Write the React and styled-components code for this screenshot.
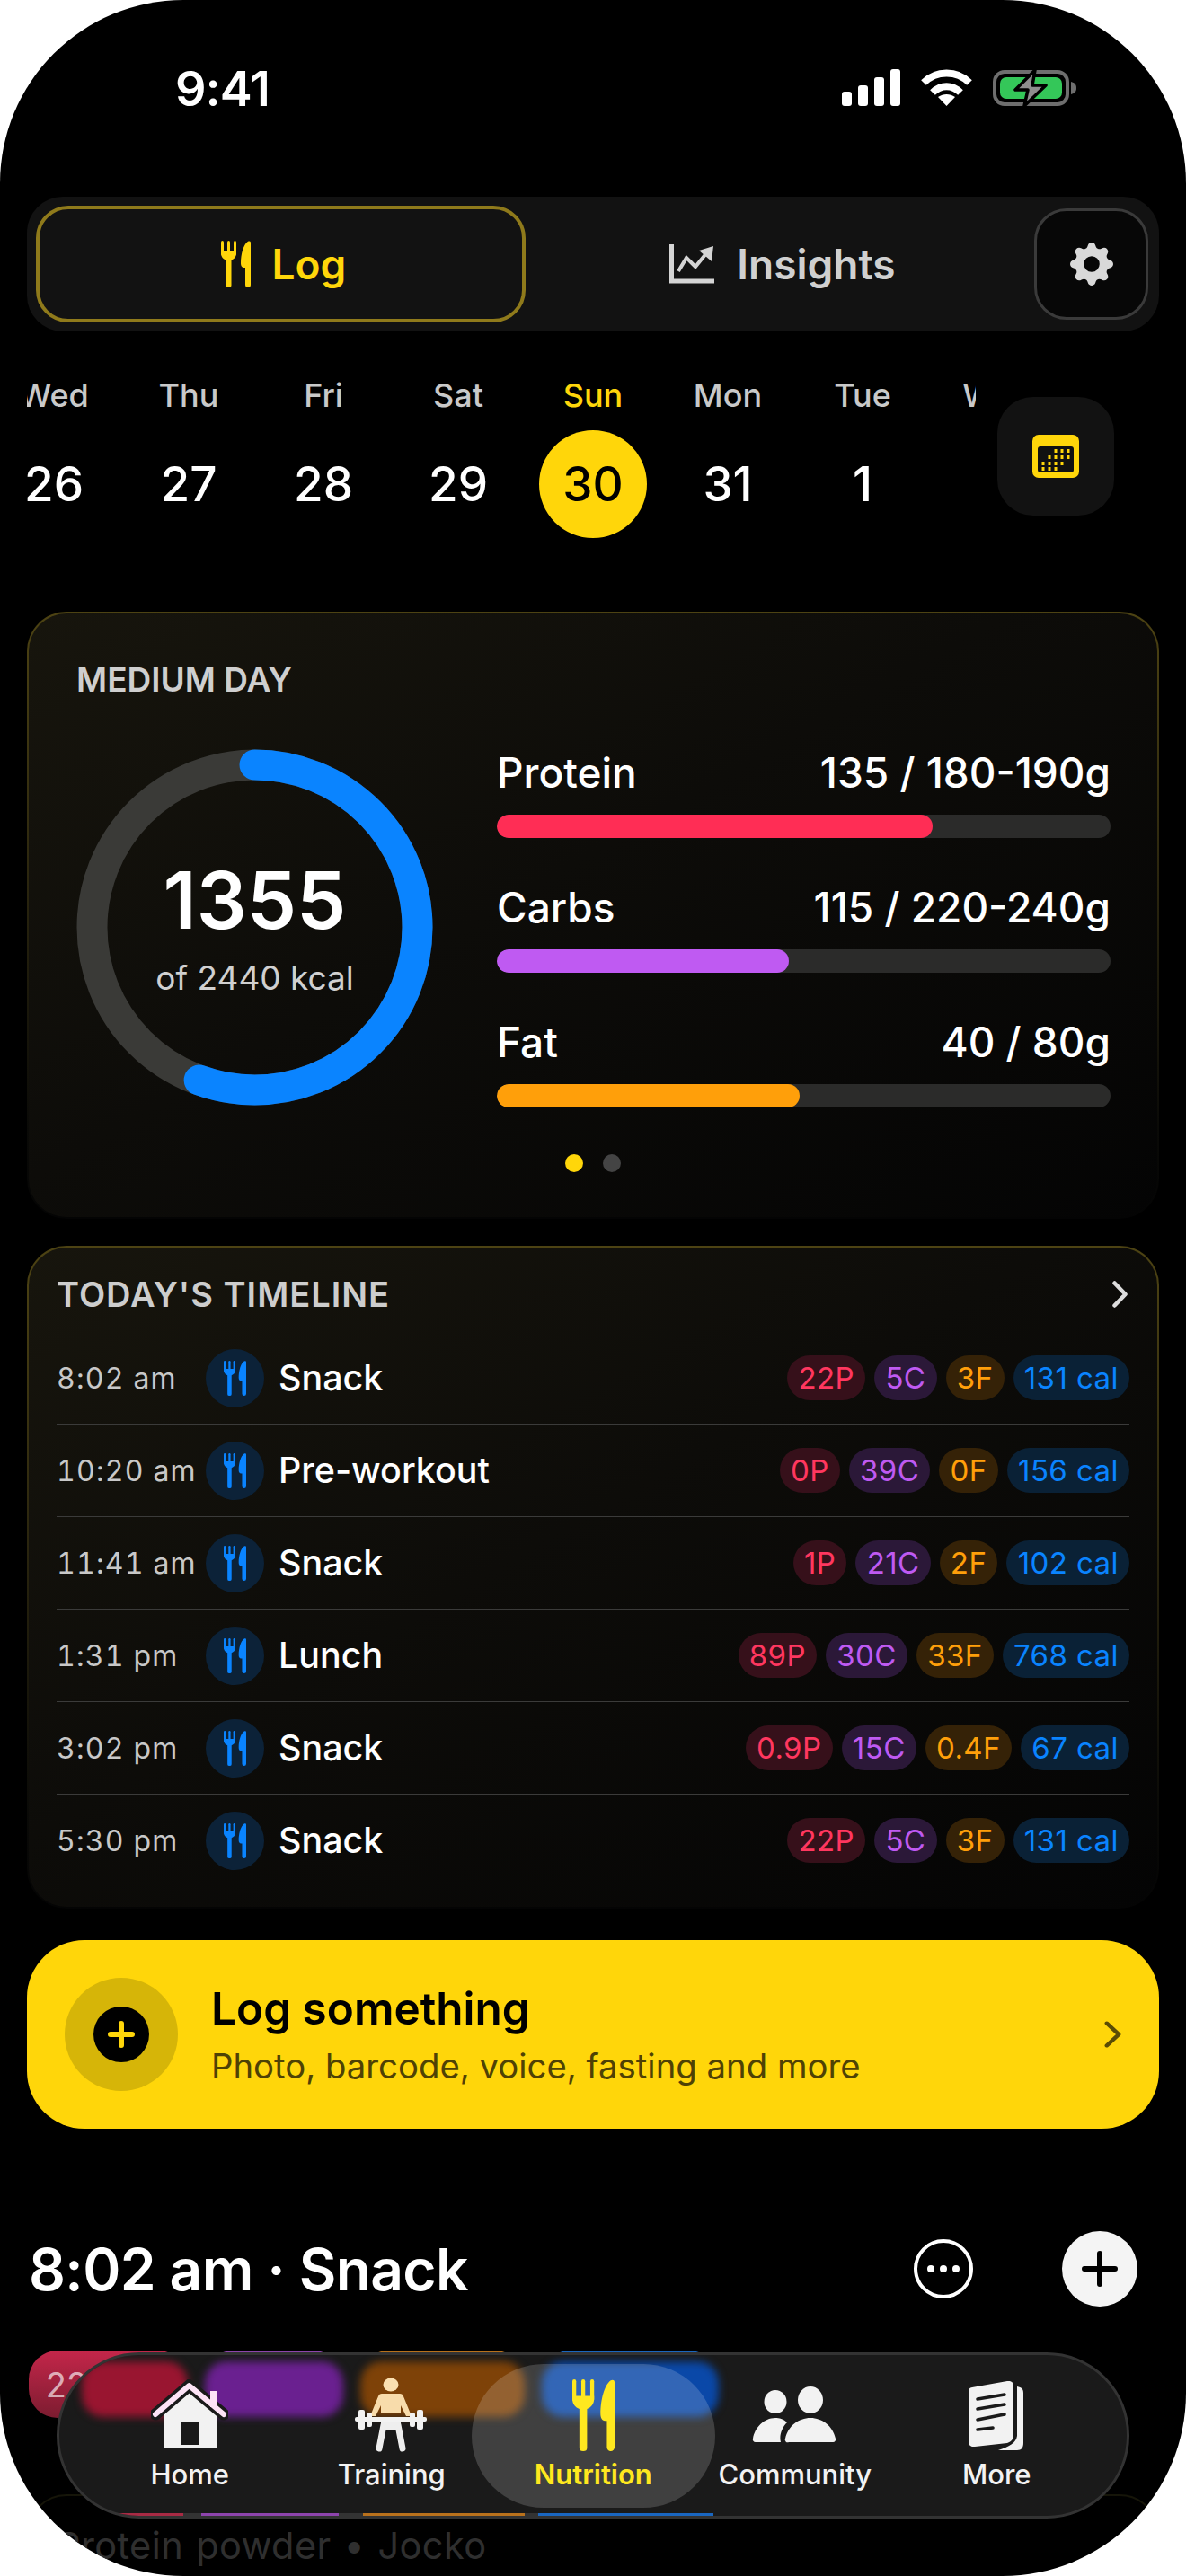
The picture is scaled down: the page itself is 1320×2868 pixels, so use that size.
import React from 'react'
import styled, { createGlobalStyle } from 'styled-components'
import { BsGearFill } from 'react-icons/bs'

const YELLOW = '#FFD60A'
const RED = '#FF375F'
const PURPLE = '#BF5AF2'
const ORANGE = '#FF9F0A'
const BLUE = '#0A84FF'

const Global = createGlobalStyle`
  html, body { margin: 0; background: #fff; }
  * { box-sizing: border-box; }
`

const Screen = styled.div`
  position: relative;
  width: 1320px;
  height: 2868px;
  padding: 0 30px;
  overflow: hidden;
  border-radius: 204px;
  background: #000;
  color: #fff;
  font-family: Inter, "Noto Sans", sans-serif;
`

const StatusBar = styled.div`
  display: flex;
  align-items: center;
  justify-content: space-between;
  height: 219px;
  padding: 0 92px 0 165px;
  & > span {
    font-size: 54px;
    font-weight: 600;
    letter-spacing: -1px;
    margin-top: -22px;
  }
`
const StatusIcons = styled.div`
  display: flex;
  align-items: center;
  gap: 23px;
  margin-top: -24px;
`

const Segment = styled.div`
  display: flex;
  align-items: center;
  height: 150px;
  padding: 0 10px;
  border-radius: 40px;
  background: #121212;
`
const SegmentTab = styled.div`
  display: flex;
  align-items: center;
  justify-content: center;
  gap: 24px;
  width: 545px;
  height: 130px;
  padding-left: 6px;
  border: 4px solid ${p => (p.$active ? '#8f7a1b' : 'transparent')};
  border-radius: 36px;
  color: ${p => (p.$active ? YELLOW : '#d0d0d0')};
  font-size: 46px;
  font-weight: 600;
`
const InsightsTab = styled(SegmentTab)`
  width: 566px;
  gap: 25px;
`
const GearButton = styled.div`
  display: flex;
  align-items: center;
  justify-content: center;
  width: 127px;
  height: 124px;
  border: 3px solid #3a3a3a;
  border-radius: 36px;
  background: #070707;
  color: #d9d9d9;
  font-size: 48px;
`

const CalendarRow = styled.div`
  display: flex;
  align-items: flex-start;
  gap: 24px;
  margin-top: 46px;
`
const DayStrip = styled.div`
  display: flex;
  flex: none;
  width: 1056px;
  overflow: hidden;
`
const DayColumn = styled.div`
  flex: none;
  width: 150px;
  display: flex;
  flex-direction: column;
  align-items: center;
  &:first-child { margin-left: -45px; }
`
const DayName = styled.div`
  height: 50px;
  line-height: 50px;
  font-size: 36px;
  font-weight: 500;
  color: ${p => (p.$active ? YELLOW : '#c9c9c9')};
`
const DayNumber = styled.div`
  display: flex;
  align-items: center;
  justify-content: center;
  width: 120px;
  height: 120px;
  margin-top: 14px;
  border-radius: 50%;
  font-size: 53px;
  font-weight: 500;
  background: ${p => (p.$active ? YELLOW : 'transparent')};
  color: ${p => (p.$active ? '#000' : '#fff')};
`
const CalendarButton = styled.div`
  flex: none;
  display: flex;
  align-items: center;
  justify-content: center;
  width: 130px;
  height: 132px;
  margin-top: 27px;
  border-radius: 40px;
  background: #121212;
`

const GoldCard = styled.section`
  border: 2px solid transparent;
  border-radius: 44px;
  background:
    linear-gradient(150deg, #17150d 0%, #0d0c09 45%, #040404 100%) padding-box,
    linear-gradient(180deg, #4d4313 0%, #2a250e 45%, #0a0a07 85%, #040404 100%) border-box;
`
const SummaryCard = styled(GoldCard)`
  margin-top: 82px;
  padding: 49px 52px 50px 53px;
`
const CardLabel = styled.div`
  height: 50px;
  line-height: 50px;
  font-size: 37px;
  font-weight: 600;
  color: #cfcfcf;
`
const SummaryBody = styled.div`
  display: flex;
  gap: 71px;
  margin-top: 52px;
`
const RingWrap = styled.div`
  position: relative;
  flex: none;
  width: 397px;
  height: 397px;
`
const RingCenter = styled.div`
  position: absolute;
  inset: 0;
  display: flex;
  flex-direction: column;
  align-items: center;
  justify-content: center;
`
const RingValue = styled.div`
  margin-top: -2px;
  font-size: 88px;
  font-weight: 600;
  line-height: 100px;
`
const RingCaption = styled.div`
  margin-top: 14px;
  font-size: 37px;
  color: #d0d0d0;
`
const MacroList = styled.div`
  flex: 1;
  display: flex;
  flex-direction: column;
  gap: 51px;
`
const MacroHead = styled.div`
  display: flex;
  justify-content: space-between;
  height: 52px;
  line-height: 52px;
  font-size: 46px;
  font-weight: 500;
`
const MacroTrack = styled.div`
  height: 26px;
  margin-top: 21px;
  border-radius: 13px;
  overflow: hidden;
  background: #2b2b2a;
`
const MacroFill = styled.div`
  height: 100%;
  border-radius: 13px;
  background: ${p => p.$color};
`
const Dots = styled.div`
  display: flex;
  justify-content: center;
  gap: 22px;
  margin: 52px 0 0 -1px;
`
const Dot = styled.span`
  width: 20px;
  height: 20px;
  border-radius: 50%;
  background: ${p => (p.$active ? YELLOW : '#444')};
`

const TimelineCard = styled(GoldCard)`
  margin-top: 30px;
  padding: 27px 31px 22px;
`
const TimelineHead = styled.div`
  display: flex;
  align-items: center;
  justify-content: space-between;
  height: 50px;
  margin-bottom: 17px;
  padding-right: 2px;
  font-size: 38px;
  font-weight: 600;
  letter-spacing: 1px;
  color: #cdcdcd;
`
const Row = styled.div`
  display: flex;
  align-items: center;
  height: 103px;
  border-bottom: 1.5px solid ${p => (p.$last ? 'transparent' : '#3b3b3a')};
`
const RowTime = styled.div`
  flex: none;
  width: 166px;
  font-size: 32px;
  font-variant-numeric: tabular-nums;
  letter-spacing: 1.2px;
  color: #c8c8c8;
`
const RowIcon = styled.div`
  flex: none;
  display: flex;
  align-items: center;
  justify-content: center;
  width: 65px;
  height: 65px;
  border-radius: 50%;
  background: #0c2238;
  color: ${BLUE};
`
const RowTitle = styled.div`
  flex: 1;
  margin-left: 16px;
  font-size: 39.4px;
  font-weight: 500;
`
const Pills = styled.div`
  display: flex;
  gap: 10px;
`
const Pill = styled.span`
  display: flex;
  align-items: center;
  height: 50px;
  padding: 0 12.2px;
  border-radius: 25px;
  font-size: 33px;
  letter-spacing: 0.4px;
  color: ${p => p.$color};
  background: ${p => p.$bg};
`

const LogBanner = styled.div`
  display: flex;
  align-items: center;
  height: 210px;
  margin-top: 35px;
  padding: 0 42px;
  border-radius: 64px;
  background: ${YELLOW};
`
const LogHalo = styled.div`
  flex: none;
  display: flex;
  align-items: center;
  justify-content: center;
  width: 126px;
  height: 126px;
  border-radius: 50%;
  background: #d6b508;
`
const LogDisc = styled.div`
  display: flex;
  align-items: center;
  justify-content: center;
  width: 62px;
  height: 62px;
  border-radius: 50%;
  background: #000;
`
const LogText = styled.div`
  flex: 1;
  margin-left: 37px;
`
const LogTitle = styled.div`
  font-size: 49.5px;
  font-weight: 600;
  line-height: 60px;
  color: #000;
`
const LogSub = styled.div`
  margin-top: 10px;
  font-size: 38.3px;
  line-height: 48px;
  color: #4f4205;
`

const MealHead = styled.div`
  display: flex;
  align-items: center;
  height: 80px;
  margin-top: 116px;
  padding-left: 2px;
  font-size: 64px;
  font-weight: 600;
  letter-spacing: -0.6px;
`
const MealTitle = styled.div`
  flex: 1;
`
const MoreRing = styled.div`
  display: flex;
  align-items: center;
  justify-content: center;
  width: 66px;
  height: 66px;
  margin-right: 99px;
  border: 4.5px solid #fff;
  border-radius: 50%;
  gap: 6px;
  & > i {
    width: 8px;
    height: 8px;
    border-radius: 50%;
    background: #fff;
  }
`
const AddDisc = styled.div`
  display: flex;
  align-items: center;
  justify-content: center;
  width: 84px;
  height: 84px;
  margin-right: 24px;
  border-radius: 50%;
  background: #f4f4f4;
`
const ChipRow = styled.div`
  display: flex;
  gap: 19px;
  margin: 51px 0 0 2px;
`
const Chip = styled.div`
  display: flex;
  align-items: center;
  justify-content: center;
  flex: none;
  width: ${p => p.$w}px;
  height: 75px;
  border-radius: 32px;
  font-size: 38px;
  color: rgba(255, 255, 255, 0.65);
  background: linear-gradient(180deg, ${p => p.$from}, ${p => p.$to});
`
const FoodCard = styled.div`
  margin-top: 85px;
  height: 120px;
  padding: 30px 31px 0;
  border: 2px solid #161509;
  border-radius: 44px;
  font-size: 41.5px;
  line-height: 50px;
  letter-spacing: 0.4px;
  word-spacing: 2px;
  color: #2f2f2f;
`

const TabBar = styled.nav`
  position: absolute;
  left: 63px;
  right: 63px;
  bottom: 64px;
  height: 185px;
  padding: 0 33px;
  display: grid;
  grid-template-columns: repeat(5, 224.5px);
  border: 3px solid #333;
  border-radius: 92px;
  background: #1a1a1a;
  overflow: hidden;
`
const Refraction = styled.div`
  position: absolute;
  top: 7px;
  left: 25px;
  display: flex;
  gap: 19px;
  filter: blur(5px);
`
const RefractedChip = styled.div`
  flex: none;
  width: ${p => p.$w}px;
  height: 62px;
  border-radius: 24px;
  background: ${p => p.$bg};
`
const EdgeGlow = styled.div`
  position: absolute;
  left: 30px;
  right: 460px;
  bottom: 0;
  height: 3px;
  background: linear-gradient(
    90deg,
    #a82a44 0 15.5%,
    #333 15.5% 18.4%,
    #8e44ad 18.4% 40.3%,
    #333 40.3% 44.1%,
    #b9711c 44.1% 69.9%,
    #333 69.9% 72%,
    #1a66c0 72% 100%
  );
`
const TabItem = styled.div`
  position: relative;
  display: flex;
  flex-direction: column;
  align-items: center;
  padding-top: 23px;
  color: ${p => (p.$active ? '#FFE81F' : '#f2f2f2')};
`
const ActivePill = styled.div`
  position: absolute;
  top: 10px;
  left: -23px;
  right: -23px;
  height: 160px;
  border-radius: 80px;
  background: rgba(255, 255, 255, 0.17);
`
const TabIcon = styled.div`
  position: relative;
  display: flex;
  align-items: center;
  justify-content: center;
  height: 88px;
`
const TabLabel = styled.div`
  position: relative;
  margin-top: 2px;
  font-size: 31px;
  line-height: 40px;
  font-weight: ${p => (p.$active ? 600 : 500)};
`

// cutlery glyph shared by the tabs and the timeline rows
const Cutlery = ({ w = 33, h = 52 }) => (
  <svg width={w} height={h} viewBox="0 0 33 52" preserveAspectRatio="none" fill="currentColor">
    <rect x="0" y="0" width="3" height="16" rx="1.5" />
    <rect x="7" y="0" width="3" height="16" rx="1.5" />
    <rect x="14" y="0" width="3" height="16" rx="1.5" />
    <path d="M0 12H17V14C17 18 14.5 20.5 11.5 21.5V49.5A3 2.5 0 0 1 5.5 49.5V21.5C2.5 20.5 0 18 0 14Z" />
    <path d="M33 2V49A3 3 0 0 1 27 49V30H25.5C23 30 22 27.5 22 25C22 15 25 4 30 .8C31.5 0 33 .5 33 2Z" />
  </svg>
)

const Signal = () => (
  <svg width="65" height="41" viewBox="0 0 65 41" fill="#fff">
    <rect x="0" y="25" width="11" height="16" rx="3" />
    <rect x="18" y="18" width="11" height="23" rx="3" />
    <rect x="36" y="9" width="11" height="32" rx="3" />
    <rect x="54" y="0" width="11" height="41" rx="3" />
  </svg>
)

const Wifi = () => (
  <svg width="57" height="41" viewBox="0 0 57 41" fill="none" stroke="#fff" strokeWidth="8">
    <path d="M3 15C17 1 40 1 54 15" />
    <path d="M13 26C22 17 35 17 44 26" />
    <path d="M19 31L28.5 41L38 31C32 27 25 27 19 31Z" fill="#fff" stroke="none" />
  </svg>
)

const Battery = () => (
  <svg width="93" height="43" viewBox="0 0 93 43">
    <rect x="2" y="4" width="81" height="36" rx="11" fill="none" stroke="#6e6e6e" strokeWidth="4" />
    <rect x="8" y="10" width="69" height="24" rx="7" fill="#34C759" />
    <path d="M87 15C91 16 93 18 93 22C93 26 91 28 87 29Z" fill="#6e6e6e" />
    <path d="M47 2L25 24H39L35 42L59 19H44Z" fill="#8e8e8e" stroke="#000" strokeWidth="3.5" strokeLinejoin="round" />
  </svg>
)

const InsightsIcon = () => (
  <svg width="50" height="44" viewBox="0 0 50 44">
    <path d="M2.5 0V41H50" fill="none" stroke="#d4d4d4" strokeWidth="5" />
    <path d="M10 30L19 15L29 25L42 9" fill="none" stroke="#d4d4d4" strokeWidth="4" />
    <path d="M33 7L49 2L47 19Z" fill="#d4d4d4" />
  </svg>
)

const CalendarIcon = () => (
  <svg width="52" height="48" viewBox="0 0 52 48">
    <rect width="52" height="48" rx="7" fill={YELLOW} />
    <rect x="6" y="13" width="40" height="29" rx="3" fill="#111" />
    {[
      [26, 33, 40, 18], [19, 26, 33, 40, 25], [12, 19, 26, 33, 32], [12, 19, 26, 38],
    ].map((row, i) =>
      row.slice(0, -1).map(x => (
        <rect key={`${i}-${x}`} x={x - 1.5} y={row[row.length - 1] - 2} width="3" height="4" fill={YELLOW} />
      ))
    )}
  </svg>
)

const Chevron = ({ color = '#ddd', w = 17, h = 30, sw = 4.5 }) => (
  <svg width={w} height={h} viewBox="0 0 17 30" preserveAspectRatio="none" fill="none">
    <path d="M2.5 2.5L14.5 15L2.5 27.5" stroke={color} strokeWidth={sw} strokeLinecap="round" strokeLinejoin="round" />
  </svg>
)

const HomeIcon = () => (
  <svg width="86" height="80" viewBox="0 0 86 80">
    <path d="M14 34L42.5 13L74 34V73A4 4 0 0 1 70 77H18A4 4 0 0 1 14 73Z" fill="#f2f2f2" />
    <rect x="34" y="48" width="20" height="25" fill="#1a1a1a" />
    <path d="M5 39L42.5 7L81 39" fill="none" stroke="#1a1a1a" strokeWidth="13" strokeLinecap="round" />
    <rect x="66" y="13" width="8" height="18" fill="#fde3f6" />
    <path d="M5 39L42.5 7L81 39" fill="none" stroke="#fde3f6" strokeWidth="6" strokeLinecap="round" strokeLinejoin="round" />
  </svg>
)

const TrainingIcon = () => (
  <svg width="84" height="84" viewBox="0 0 84 84">
    <ellipse cx="41" cy="8" rx="8.5" ry="7.5" fill="#fbe0b0" />
    <path d="M31 18H51Q54 18 55 21L64 43H58L52 31V40H30V31L24 43H18L27 21Q28 18 31 18Z" fill="#f8dcab" />
    <rect x="1" y="44" width="80" height="5" rx="2" fill="#f2f2f2" />
    <rect x="5" y="36" width="7" height="22" rx="2" fill="#f2f2f2" />
    <rect x="14" y="39" width="6" height="16" rx="2" fill="#f2f2f2" />
    <rect x="62" y="39" width="6" height="16" rx="2" fill="#f2f2f2" />
    <rect x="70" y="36" width="7" height="22" rx="2" fill="#f2f2f2" />
    <path d="M33 53L28 79M49 53L54 79" fill="none" stroke="#eee" strokeWidth="7" strokeLinecap="round" />
    <rect x="30" y="50" width="22" height="9" fill="#eee" />
  </svg>
)

const CommunityIcon = () => (
  <svg width="96" height="64" viewBox="0 0 96 64" fill="#f2f2f2">
    <ellipse cx="26" cy="17" rx="12.5" ry="13" />
    <ellipse cx="65" cy="15" rx="14" ry="15" />
    <path d="M41 62H90A3 3 0 0 0 93 58C90 44 78 35 65 35C52 35 40 44 37 58A3 3 0 0 0 41 62Z" />
    <path d="M4 62H32C30 55 33 46 39 40C35 36 30 35 26 35C13 35 3 46 1 58A3 3 0 0 0 4 62Z" />
  </svg>
)

const MoreIcon = () => (
  <svg width="64" height="82" viewBox="0 0 64 82">
    <path d="M55 9C60 10 62 12 62 16V72C62 77 60 80 55 80H34C46 76 54 72 55 64Z" fill="#f2f2f2" />
    <path d="M5 10L44 3C48 2.5 51 4 51 8V62C51 68 49 70 44 72L8 76C3 76.5 1 74 1 70V15C1 12 2 10.500 5 10Z" fill="#f2f2f2" />
    <path d="M11 23L41 18M11 34L41 29M11 46L41 40M11 57L28 55" fill="none" stroke="#1a1a1a" strokeWidth="3.6" strokeLinecap="round" />
  </svg>
)

const days = [
  ['Wed', '26'], ['Thu', '27'], ['Fri', '28'], ['Sat', '29'],
  ['Sun', '30', true], ['Mon', '31'], ['Tue', '1'], ['Wed', '2'],
]

const macros = [
  { name: 'Protein', value: '135 / 180-190g', pct: 71, color: '#FF2D55' },
  { name: 'Carbs', value: '115 / 220-240g', pct: 47.6, color: PURPLE },
  { name: 'Fat', value: '40 / 80g', pct: 49.4, color: ORANGE },
]

const meals = [
  ['8:02 am', 'Snack', '22P', '5C', '3F', '131 cal'],
  ['10:20 am', 'Pre-workout', '0P', '39C', '0F', '156 cal'],
  ['11:41 am', 'Snack', '1P', '21C', '2F', '102 cal'],
  ['1:31 pm', 'Lunch', '89P', '30C', '33F', '768 cal'],
  ['3:02 pm', 'Snack', '0.9P', '15C', '0.4F', '67 cal'],
  ['5:30 pm', 'Snack', '22P', '5C', '3F', '131 cal'],
]

const pillTones = [
  [RED, '#36101a'],
  [PURPLE, '#2b1838'],
  [ORANGE, '#352207'],
  [BLUE, '#0a2136'],
]

const tabs = [
  { label: 'Home', icon: <HomeIcon /> },
  { label: 'Training', icon: <TrainingIcon /> },
  { label: 'Nutrition', icon: <Cutlery w={47} h={80} />, active: true },
  { label: 'Community', icon: <CommunityIcon /> },
  { label: 'More', icon: <MoreIcon /> },
]

const Ring = () => {
  const r = 181
  const c = 2 * Math.PI * r
  const part = (1355 / 2440) * c
  return (
    <svg width="397" height="397" viewBox="0 0 397 397">
      <circle cx="198.5" cy="198.5" r={r} fill="none" stroke="#3a3a37" strokeWidth="34" />
      <circle
        cx="198.5"
        cy="198.5"
        r={r}
        fill="none"
        stroke={BLUE}
        strokeWidth="34"
        strokeLinecap="round"
        strokeDasharray={`${part} ${c}`}
        transform="rotate(-90 198.5 198.5)"
      />
    </svg>
  )
}

export default function App() {
  return (
    <Screen>
      <Global />
      <StatusBar>
        <span>9:41</span>
        <StatusIcons>
          <Signal />
          <Wifi />
          <Battery />
        </StatusIcons>
      </StatusBar>

      <Segment>
        <SegmentTab $active>
          <Cutlery />
          Log
        </SegmentTab>
        <InsightsTab>
          <InsightsIcon />
          Insights
        </InsightsTab>
        <GearButton>
          <BsGearFill />
        </GearButton>
      </Segment>

      <CalendarRow>
        <DayStrip>
          {days.map(([name, num, active]) => (
            <DayColumn key={name + num}>
              <DayName $active={active}>{name}</DayName>
              {num !== '2' && <DayNumber $active={active}>{num}</DayNumber>}
            </DayColumn>
          ))}
        </DayStrip>
        <CalendarButton>
          <CalendarIcon />
        </CalendarButton>
      </CalendarRow>

      <SummaryCard>
        <CardLabel>MEDIUM DAY</CardLabel>
        <SummaryBody>
          <RingWrap>
            <Ring />
            <RingCenter>
              <RingValue>1355</RingValue>
              <RingCaption>of 2440 kcal</RingCaption>
            </RingCenter>
          </RingWrap>
          <MacroList>
            {macros.map(m => (
              <div key={m.name}>
                <MacroHead>
                  <span>{m.name}</span>
                  <span>{m.value}</span>
                </MacroHead>
                <MacroTrack>
                  <MacroFill $color={m.color} style={{ width: `${m.pct}%` }} />
                </MacroTrack>
              </div>
            ))}
          </MacroList>
        </SummaryBody>
        <Dots>
          <Dot $active />
          <Dot />
        </Dots>
      </SummaryCard>

      <TimelineCard>
        <TimelineHead>
          TODAY'S TIMELINE
          <Chevron />
        </TimelineHead>
        {meals.map(([time, title, ...stats], i) => (
          <Row key={time} $last={i === meals.length - 1}>
            <RowTime>{time}</RowTime>
            <RowIcon>
              <Cutlery w={25} h={39} />
            </RowIcon>
            <RowTitle>{title}</RowTitle>
            <Pills>
              {stats.map((s, j) => (
                <Pill key={j} $color={pillTones[j][0]} $bg={pillTones[j][1]}>
                  {s}
                </Pill>
              ))}
            </Pills>
          </Row>
        ))}
      </TimelineCard>

      <LogBanner>
        <LogHalo>
          <LogDisc>
            <svg width="30" height="30" viewBox="0 0 30 30">
              <path d="M15 3V27M3 15H27" stroke={YELLOW} strokeWidth="6" strokeLinecap="round" />
            </svg>
          </LogDisc>
        </LogHalo>
        <LogText>
          <LogTitle>Log something</LogTitle>
          <LogSub>Photo, barcode, voice, fasting and more</LogSub>
        </LogText>
        <Chevron color="#5a4c05" w={19} h={30} sw={4} />
      </LogBanner>

      <MealHead>
        <MealTitle>8:02 am · Snack</MealTitle>
        <MoreRing>
          <i />
          <i />
          <i />
        </MoreRing>
        <AddDisc>
          <svg width="40" height="40" viewBox="0 0 40 40">
            <path d="M20 3V37M3 20H37" stroke="#000" strokeWidth="6" strokeLinecap="round" />
          </svg>
        </AddDisc>
      </MealHead>

      <ChipRow>
        <Chip $w={176} $from="#c4264a" $to="#7c1c30">22.0g P</Chip>
        <Chip $w={154} $from="#8e44ad" $to="#5e2a78">5.0g C</Chip>
        <Chip $w={183} $from="#b9711c" $to="#7c4a10">3.0g F</Chip>
        <Chip $w={197} $from="#1a66c0" $to="#0f3f80">131 cal</Chip>
      </ChipRow>
      <FoodCard>Protein powder • Jocko</FoodCard>

      <TabBar>
        <Refraction>
          <RefractedChip $w={118} $bg="#991530" />
          <RefractedChip $w={154} $bg="#6a2090" />
          <RefractedChip $w={183} $bg="#7e4208" />
          <RefractedChip $w={197} $bg="#0a48a8" />
        </Refraction>
        <EdgeGlow />
        {tabs.map(t => (
          <TabItem key={t.label} $active={t.active}>
            {t.active && <ActivePill />}
            <TabIcon>{t.icon}</TabIcon>
            <TabLabel $active={t.active}>{t.label}</TabLabel>
          </TabItem>
        ))}
      </TabBar>
    </Screen>
  )
}
